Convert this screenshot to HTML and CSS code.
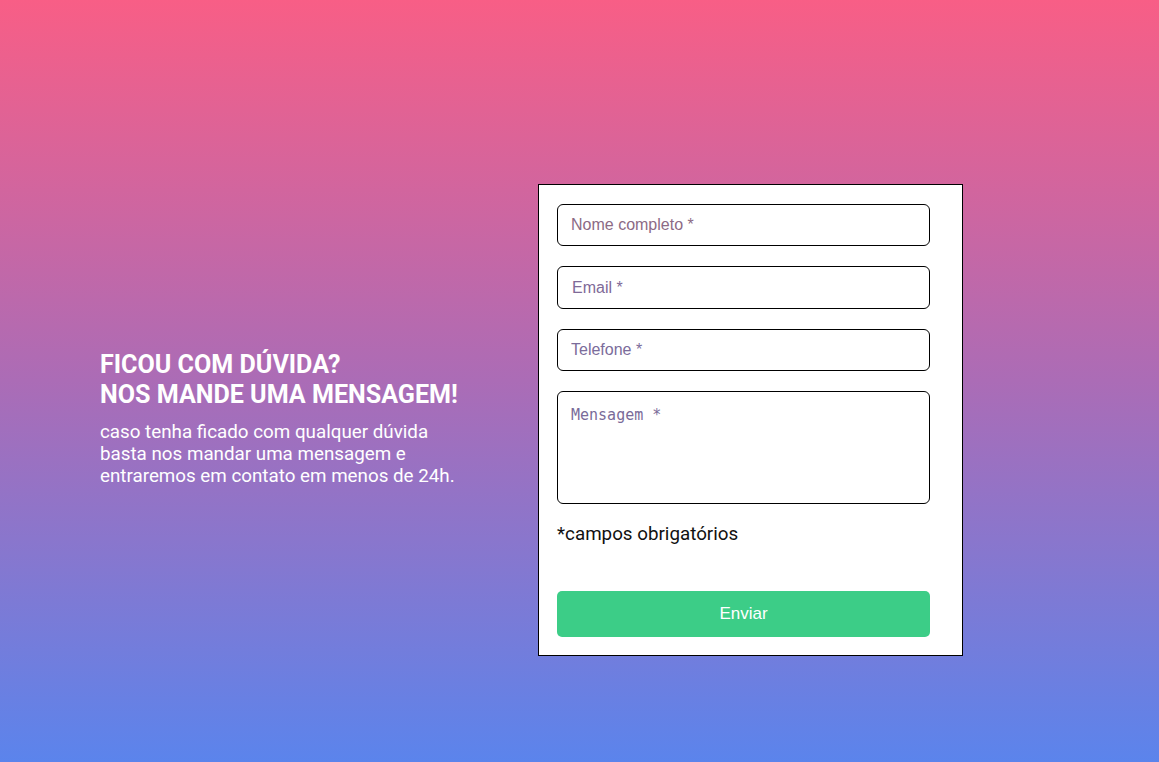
FILE: index.html
```html
<!DOCTYPE html>
<html lang="pt-BR">
<head>
<meta charset="utf-8">
<title>Contato</title>
<link rel="stylesheet" href="styles.css">
</head>
<body>
<main class="contact">
  <section class="intro">
    <h1 class="intro-title">FICOU COM DÚVIDA?<br>NOS MANDE UMA MENSAGEM!</h1>
    <p class="intro-text">caso tenha ficado com qualquer dúvida<br>basta nos mandar uma mensagem e<br>entraremos em contato em menos de 24h.</p>
  </section>
  <form class="contact-form">
    <input class="field field-name" type="text" placeholder="Nome completo *">
    <input class="field field-email" type="email" placeholder="Email *">
    <input class="field field-phone" type="tel" placeholder="Telefone *">
    <textarea class="field field-message" placeholder="Mensagem *"></textarea>
    <p class="required-note">*campos obrigatórios</p>
    <button class="submit" type="button">Enviar</button>
  </form>
</main>
</body>
</html>
```

FILE: styles.css
```css
* {
  box-sizing: border-box;
}

html, body {
  margin: 0;
  padding: 0;
}

body {
  min-height: 762px;
  background: linear-gradient(180deg, #f85e86 0%, #ab6cb6 50%, #5b84ec 100%);
  font-family: Roboto, "Liberation Sans", sans-serif;
}

.contact {
  display: flex;
  align-items: center;
  padding: 184px 0 0 100px;
}

.intro {
  width: 438px;
  padding-bottom: 3px;
  color: #ffffff;
}

.intro-title {
  margin: 0;
  font-size: 25.1px;
  line-height: 30px;
  font-weight: 700;
}

.intro-text {
  margin: 11px 0 0;
  font-size: 18.8px;
  line-height: 22px;
  font-weight: 400;
}

.contact-form {
  width: 425px;
  background: #ffffff;
  border: 1px solid #000000;
  padding: 19px 18px 18px 18px;
  display: flex;
  flex-direction: column;
}

.field {
  width: 373px;
  border: 1px solid #000000;
  border-radius: 6px;
  background: #ffffff;
  outline: none;
  margin: 0 0 20px;
}

.field-name,
.field-email,
.field-phone {
  height: 42.4px;
  padding: 0 13px;
  font-family: "Liberation Sans", Arial, sans-serif;
  font-size: 16px;
}

.field-email {
  padding-left: 14px;
}

.field-message {
  height: 113px;
  margin-bottom: 0;
  padding: 14px 13px 12px;
  resize: none;
  font-family: "DejaVu Sans Mono", monospace;
  font-size: 15px;
}

.field-name::placeholder { color: #8c6a85; }
.field-email::placeholder { color: #7f6a98; }
.field-phone::placeholder { color: #7b6c9b; }
.field-message::placeholder { color: #7a6b99; }

.required-note {
  margin: 20px 0 0;
  font-size: 18.8px;
  line-height: 21px;
  color: #111111;
}

.submit {
  width: 373px;
  height: 46px;
  margin-top: 46px;
  border: none;
  border-radius: 5px;
  background: #3ccd87;
  color: #ffffff;
  font-family: "Liberation Sans", Arial, sans-serif;
  font-size: 17px;
  cursor: pointer;
}
```
